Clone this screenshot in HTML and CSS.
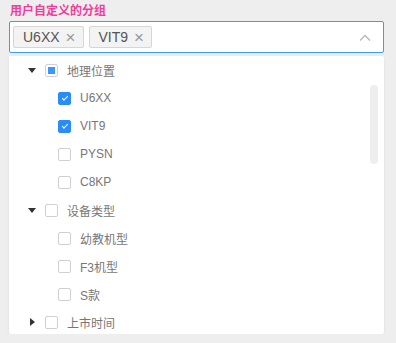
FILE: index.html
```html
<!DOCTYPE html>
<html lang="zh">
<head>
    <meta charset="UTF-8">
    <title>用户自定义的分组</title>
    <link rel="stylesheet" href="styles.css">
</head>
<body>
    <div class="field-label">用户自定义的分组</div>
    <div class="select-box">
        <span class="tag">U6XX<span class="tag-close">&times;</span></span>
        <span class="tag">VIT9<span class="tag-close">&times;</span></span>
        <svg class="select-arrow" width="12" height="7" viewBox="0 0 12 7">
            <path d="M1 6.5 L6 1.5 L11 6.5" fill="none" stroke="#b8b8b8" stroke-width="1.3"/>
        </svg>
    </div>
    <div class="dropdown">
        <div class="row parent">
            <span class="caret down"></span>
            <span class="check half"></span>
            <span class="label">地理位置</span>
        </div>
        <div class="row child">
            <span class="check on"></span>
            <span class="label">U6XX</span>
        </div>
        <div class="row child">
            <span class="check on"></span>
            <span class="label">VIT9</span>
        </div>
        <div class="row child">
            <span class="check"></span>
            <span class="label">PYSN</span>
        </div>
        <div class="row child">
            <span class="check"></span>
            <span class="label">C8KP</span>
        </div>
        <div class="row parent">
            <span class="caret down"></span>
            <span class="check"></span>
            <span class="label">设备类型</span>
        </div>
        <div class="row child">
            <span class="check"></span>
            <span class="label">幼教机型</span>
        </div>
        <div class="row child">
            <span class="check"></span>
            <span class="label">F3机型</span>
        </div>
        <div class="row child">
            <span class="check"></span>
            <span class="label">S款</span>
        </div>
        <div class="row parent">
            <span class="caret right"></span>
            <span class="check"></span>
            <span class="label">上市时间</span>
        </div>
        <div class="scrollbar"></div>
    </div>
</body>
</html>
```

FILE: styles.css
```css
body {
    margin: 0;
    padding: 3px 12px 0 9px;
    background-color: #eeeeee;
    font-family: "Liberation Sans", "Noto Sans CJK SC", sans-serif;
}

.field-label {
    font-size: 12px;
    line-height: 16px;
    font-weight: bold;
    color: #ef3d9c;
    margin-bottom: 2px;
    padding-left: 1px;
}

.select-box {
    width: 375px;
    height: 32px;
    box-sizing: border-box;
    border: 1px solid #3f9bfa;
    border-radius: 2px;
    background-color: white;
    display: flex;
    align-items: center;
    gap: 5px;
    padding: 0 3px;
}

.tag {
    height: 22px;
    box-sizing: border-box;
    border: 1px solid #d6d6d6;
    border-radius: 2px;
    background-color: #f3f3f3;
    display: flex;
    align-items: center;
    padding: 0 7px 0 9px;
    font-size: 14px;
    color: #555;
}

.tag-close {
    margin-left: 6px;
    font-size: 17px;
    line-height: 1;
    color: #999;
}

.select-arrow {
    margin-left: auto;
    margin-right: 9px;
}

.dropdown {
    position: relative;
    width: 375px;
    height: 278px;
    margin-top: 3px;
    background-color: white;
    border-radius: 2px;
    box-shadow: 0 1px 3px rgba(0, 0, 0, 0.08);
    overflow: hidden;
}

.row {
    height: 28px;
    display: flex;
    align-items: center;
    font-size: 12px;
    color: #777;
}

.row.parent {
    padding-left: 19px;
}

.row.child {
    padding-left: 49px;
}

.caret {
    width: 0;
    height: 0;
    margin-right: 9px;
}

.caret.down {
    border-left: 4px solid transparent;
    border-right: 4px solid transparent;
    border-top: 5px solid #333;
}

.caret.right {
    border-top: 4px solid transparent;
    border-bottom: 4px solid transparent;
    border-left: 5px solid #333;
    margin-left: 2px;
    margin-right: 10px;
}

.check {
    width: 13px;
    height: 13px;
    box-sizing: border-box;
    border: 1px solid #d0d0d0;
    border-radius: 2px;
    background-color: white;
    margin-right: 9px;
    position: relative;
    flex-shrink: 0;
}

.check.on {
    background-color: #2a8cf7;
    border-color: #2a8cf7;
}

.check.on::after {
    content: "";
    position: absolute;
    left: 3px;
    top: 3px;
    width: 5px;
    height: 2px;
    border-left: 1.5px solid white;
    border-bottom: 1.5px solid white;
    transform: rotate(-45deg);
}

.check.half::after {
    content: "";
    position: absolute;
    left: 2px;
    top: 2px;
    width: 7px;
    height: 7px;
    background-color: #3a98f8;
}

.scrollbar {
    position: absolute;
    right: 6px;
    top: 29px;
    width: 8px;
    height: 79px;
    border-radius: 4px;
    background-color: #eeeeee;
}
```
